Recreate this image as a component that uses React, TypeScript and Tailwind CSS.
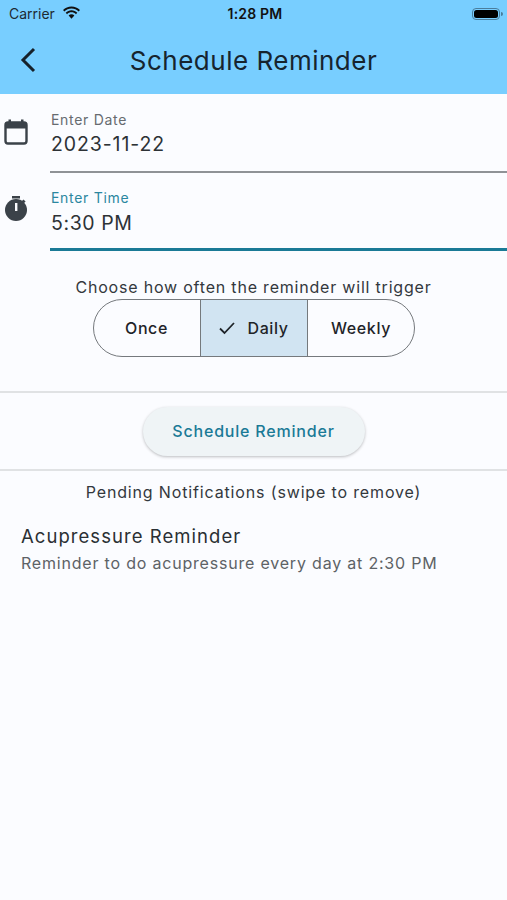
export default function App() {
  return (
    <div className="flex h-[900px] w-[507px] flex-col overflow-hidden bg-[#fbfcff] font-['Inter','Roboto',sans-serif] text-[#1c2227]">
      <header className="h-[94px] shrink-0 bg-[#78ceff]">
        <div className="flex h-[27px] items-center justify-between pl-[9px] pr-[4px] text-[14px]">
          <div className="flex w-[120px] items-center gap-[6px] text-[#1e2a33]">
            <span>Carrier</span>
            <svg width="19" height="14" viewBox="0 0 18 13" className="-mt-[1px] ml-[1px]">
              <path d="M9 2.2c2.6 0 5 1 6.8 2.8l1.2-1.3C14.9 1.5 12.1.3 9 .3S3.100 1.500 1 3.700L2.200 5C4 3.200 6.400 2.200 9 2.200z" fill="#111" />
              <path d="M9 5.900c1.600 0 3.100.6 4.200 1.700l1.300-1.300C13 4.900 11.100 4 9 4S5 4.900 3.500 6.300l1.300 1.300C5.900 6.500 7.400 5.900 9 5.900z" fill="#111" />
              <path d="M9 7.800c-1 0-2 .4-2.700 1.100L9 12l2.700-3.100C11 8.200 10 7.800 9 7.800z" fill="#111" />
            </svg>
          </div>
          <span className="pr-[2px] text-[14px] font-semibold tracking-[0.2px] text-[#111]">1:28 PM</span>
          <div className="flex w-[120px] items-center justify-end">
            <div className="flex h-[12px] w-[28px] items-center rounded-[4px] border border-[#4a7d9c] p-[1px]">
              <div className="h-full w-full rounded-[2.500px] bg-black" />
            </div>
            <div className="ml-[1px] h-[4px] w-[1.500px] rounded-r-sm bg-[#4a7d9c]" />
          </div>
        </div>
        <div className="relative flex h-[67px] items-center justify-center">
          <svg width="18" height="28" viewBox="0 0 18 28" className="absolute left-[19px] top-[19px]" fill="none" stroke="#16212a" strokeWidth="3">
            <path d="M15 3 L4 14 L15 25" />
          </svg>
          <h1 className="text-[26px] leading-none tracking-[0.5px] text-[#16242e]">Schedule Reminder</h1>
        </div>
      </header>

      <section className="flex h-[79px] shrink-0">
        <div className="w-[50px] shrink-0 pl-[3px] pt-[24px]">
          <svg width="26" height="28" viewBox="0 0 26 28" fill="none">
            <rect x="2.500" y="4.500" width="21" height="21" rx="2.500" stroke="#3b4249" strokeWidth="2.400" />
            <rect x="2.500" y="4.500" width="21" height="6" fill="#3b4249" />
            <rect x="5.500" y="1.500" width="2.500" height="5" fill="#3b4249" />
            <rect x="18" y="1.500" width="2.500" height="5" fill="#3b4249" />
          </svg>
        </div>
        <div className="flex-1 border-b-2 border-[#8f9296] pt-[18px]">
          <div className="pl-[1px] text-[14px] leading-[16px] tracking-[0.7px] text-[#666b70]">Enter Date</div>
          <div className="mt-[3px] pl-[1px] text-[19.500px] leading-[26px] tracking-[0.9px] text-[#2d3236]">2023-11-22</div>
        </div>
      </section>

      <section className="flex h-[78px] shrink-0">
        <div className="w-[50px] shrink-0 pl-[4px] pt-[22px]">
          <svg width="24" height="28" viewBox="0 0 24 28">
            <rect x="8" y="1" width="8" height="2.500" fill="#3b4249" />
            <rect x="18" y="5" width="3" height="3" transform="rotate(45 19.500 6.500)" fill="#3b4249" />
            <circle cx="12" cy="15" r="11" fill="#3b4249" />
            <rect x="11" y="8" width="2.400" height="8" fill="#fbfcff" />
          </svg>
        </div>
        <div className="flex-1 border-b-[3px] border-[#1a7a96] pt-[17px]">
          <div className="pl-[1px] text-[14px] leading-[16px] tracking-[0.7px] text-[#2b87a0]">Enter Time</div>
          <div className="mt-[4px] pl-[1px] text-[19.500px] leading-[26px] tracking-[0.6px] text-[#2d3236]">5:30 PM</div>
        </div>
      </section>

      <section className="flex shrink-0 flex-col items-center pt-[26px]">
        <p className="text-[16px] leading-[20px] tracking-[0.8px] text-[#33383d]">Choose how often the reminder will trigger</p>
        <div className="mt-[2px] flex h-[58px] w-[322px] overflow-hidden rounded-full border border-[#75797d] text-[16px] font-[450] tracking-[0.6px] text-[#1f2429]">
          <div className="flex w-[106px] items-center justify-center">Once</div>
          <div className="flex w-[108px] items-center justify-center gap-[11px] border-x border-[#75797d] bg-[#d1e4f2]">
            <svg width="18" height="14" viewBox="0 0 18 14" fill="none" stroke="#1f2429" strokeWidth="1.800">
              <path d="M2 7.500 L6.500 12 L16 2" />
            </svg>
            <span>Daily</span>
          </div>
          <div className="flex flex-1 items-center justify-center pl-[1px]">Weekly</div>
        </div>
      </section>

      <div className="mt-[34px] h-[2px] shrink-0 bg-[#e0e2e4]" />

      <section className="flex h-[76px] shrink-0 items-start justify-center pt-[14px]">
        <div className="flex h-[49px] w-[222px] items-center justify-center rounded-full bg-[#eff4f6] pb-[1px] text-[16px] font-[450] tracking-[0.8px] text-[#1a7a96] shadow-[0_1px_3px_rgba(0,0,0,0.25)]">
          Schedule Reminder
        </div>
      </section>

      <div className="h-[2px] shrink-0 bg-[#e0e2e4]" />

      <p className="mt-[11px] text-center text-[16px] leading-[20px] tracking-[0.85px] text-[#33383d]">Pending Notifications (swipe to remove)</p>

      <div className="pl-[21px] pt-[21px]">
        <div className="text-[18.500px] leading-[26px] tracking-[1.05px] text-[#2a2f33]">Acupressure Reminder</div>
        <div className="mt-[2px] text-[16px] leading-[24px] tracking-[0.8px] text-[#5d6266]">Reminder to do acupressure every day at 2:30 PM</div>
      </div>
    </div>
  );
}
